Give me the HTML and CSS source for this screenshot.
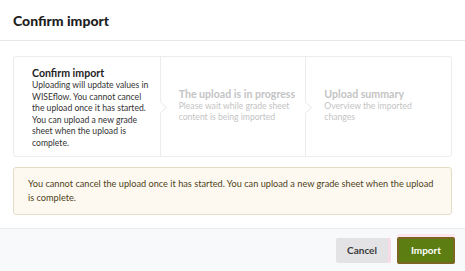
FILE: index.html
```html
<!DOCTYPE html>
<html lang="en">
<head>
    <meta charset="UTF-8">
    <meta name="viewport" content="width=device-width, initial-scale=1.0">
    <title>Confirm import</title>
    <link rel="stylesheet" href="styles.css">
</head>
<body>
    <div class="modal">
        <div class="modal-header">
            <h1>Confirm import</h1>
        </div>
        <div class="modal-body">
            <div class="steps">
                <div class="step active">
                    <h2>Confirm import</h2>
                    <p>Uploading will update values in WISEflow. You cannot cancel the upload once it has started. You can upload a new grade sheet when the upload is complete.</p>
                </div>
                <div class="step">
                    <h2>The upload is in progress</h2>
                    <p>Please wait while grade sheet content is being imported</p>
                </div>
                <div class="step">
                    <h2>Upload summary</h2>
                    <p>Overview the imported changes</p>
                </div>
            </div>
            <div class="alert">
                You cannot cancel the upload once it has started. You can upload a new grade sheet when the upload is complete.
            </div>
        </div>
        <div class="modal-footer">
            <button class="btn btn-cancel">Cancel</button>
            <button class="btn btn-import">Import</button>
        </div>
    </div>
</body>
</html>
```

FILE: styles.css
```css
body {
    margin: 0;
    font-family: Lato, "Open Sans", sans-serif;
    color: #222;
    background: #fff;
}
.modal {
    width: 465px;
    height: 271px;
    display: flex;
    flex-direction: column;
}
.modal-header {
    height: 41px;
    box-sizing: border-box;
    border-bottom: 1px solid #e6e6e6;
    padding: 0 13px;
    display: flex;
    align-items: center;
}
.modal-header h1 {
    margin: 0;
    font-size: 14px;
    font-weight: 900;
    color: #1e1e1e;
}
.modal-body {
    padding: 15px 13px 13px 13px;
}
.steps {
    display: grid;
    grid-template-columns: repeat(3, minmax(0, 1fr));
    height: 101px;
    border: 1px solid #ececec;
    border-radius: 3px;
    box-sizing: border-box;
}
.step {
    position: relative;
    padding: 10px 11px 0 18px;
    border-left: 1px solid #ececec;
}
.step:first-child {
    border-left: none;
}
.step:nth-child(2),
.step:nth-child(3) {
    display: flex;
    flex-direction: column;
    justify-content: center;
    padding-top: 0;
    padding-right: 10px;
    padding-bottom: 2px;
}
.step + .step::before {
    content: "";
    position: absolute;
    left: -5px;
    top: 46px;
    width: 8px;
    height: 8px;
    background: #fff;
    border-top: 1px solid #ececec;
    border-right: 1px solid #ececec;
    transform: rotate(45deg);
}
.step h2 {
    margin: 0;
    font-size: 10.6px;
    font-weight: 700;
    line-height: 13px;
}
.step p {
    margin: 0;
    font-size: 8.6px;
    line-height: 11.5px;
}
.step.active h2 {
    color: #1e1e1e;
}
.step.active p {
    color: #333;
}
.step:not(.active) h2,
.step:not(.active) p {
    color: #c4c4c4;
}
.alert {
    margin-top: 10px;
    background: #fdf9f1;
    border: 1px solid #e4dcc6;
    border-radius: 3px;
    padding: 9px 12px 9px 14px;
    font-size: 9.2px;
    line-height: 14px;
    color: #4e4218;
}
.modal-footer {
    flex: 1;
    background: #f8f9fb;
    border-top: 1px solid #e8e9ec;
    display: flex;
    justify-content: flex-end;
    align-items: center;
    gap: 9px;
    padding: 0 10px 0 0;
}
.btn {
    font-family: inherit;
    font-size: 10px;
    font-weight: 700;
    border-radius: 2px;
    cursor: pointer;
}
.btn-cancel {
    width: 52px;
    height: 25px;
    background: #e3e3e5;
    border: none;
    color: #3a3a3a;
    box-shadow: 3px 0 0 #f7dbe5;
}
.btn-import {
    width: 58px;
    height: 27px;
    background: #5b7d12;
    border: 2px solid #7a6522;
    color: #fff;
    box-shadow: 0 -3px 0 #fde4ef;
}
```
